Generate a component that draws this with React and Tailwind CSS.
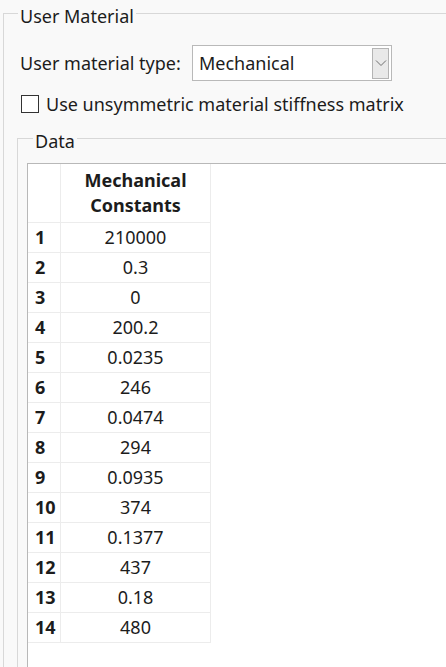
import React from 'react';

const rows = ['210000', '0.3', '0', '200.2', '0.0235', '246', '0.0474', '294', '0.0935', '374', '0.1377', '437', '0.18', '480'];

const ChevronDown = () => (
  <svg width="12" height="8" viewBox="0 0 12 8" fill="none">
    <path d="M1 1.5 L6 6.5 L11 1.5" stroke="#6f6f6f" strokeWidth="1" />
  </svg>
);

export default function App() {
  return (
    <div className="h-[667px] w-[446px] overflow-hidden bg-[#f9f9f9] text-[#1c1c1c] font-['Noto_Sans',sans-serif] text-[18px]">
      <fieldset className="ml-[3px] h-[700px] border-l border-t border-[#d8d8d8] pl-[14px]">
        <legend className="px-[2px] pt-[6px] leading-[20px]">User Material</legend>

        <div className="ml-[2px] mt-[19px] flex h-[36px] items-center">
          <span className="w-[172px] whitespace-nowrap">User material type:</span>
          <div className="flex h-[36px] w-[200px] items-center justify-between border border-[#b9b9b9] bg-white pl-[6px] pr-[2px]">
            <span>Mechanical</span>
            <div className="flex h-[31px] w-[17px] items-center justify-center border border-[#b4b4b4] bg-[#e9e9e9]">
              <ChevronDown />
            </div>
          </div>
        </div>

        <label className="ml-[3px] mt-[11px] flex h-[24px] items-center gap-[7px]">
          <span className="h-[18px] w-[18px] border border-[#333] bg-white" />
          <span className="whitespace-nowrap">Use unsymmetric material stiffness matrix</span>
        </label>

        <fieldset className="mt-[9px] ml-[-1px] h-[600px] border-l border-t border-[#d8d8d8] pl-[9px]">
          <legend className="ml-[6px] px-[2px] pt-[6px] leading-[20px]">Data</legend>

          <div className="mt-[12px] h-[560px] border-l border-t border-[#b8b8b8] bg-white">
            <div className="flex">
              <div className="h-[59px] w-[33px] border-b border-r border-[#ececec]" />
              <div className="flex h-[59px] w-[150px] flex-col items-center justify-center border-b border-r border-[#ececec] font-bold leading-[25px]">
                <span>Mechanical</span>
                <span>Constants</span>
              </div>
            </div>
            {rows.map((v, i) => (
              <div key={i} className="flex">
                <div className="flex h-[30px] w-[33px] items-center border-b border-r border-[#ececec] pl-[7px] font-bold">
                  {i + 1}
                </div>
                <div className="flex h-[30px] w-[150px] items-center justify-center border-b border-r border-[#ececec]">
                  {v}
                </div>
              </div>
            ))}
          </div>
        </fieldset>
      </fieldset>
    </div>
  );
}
